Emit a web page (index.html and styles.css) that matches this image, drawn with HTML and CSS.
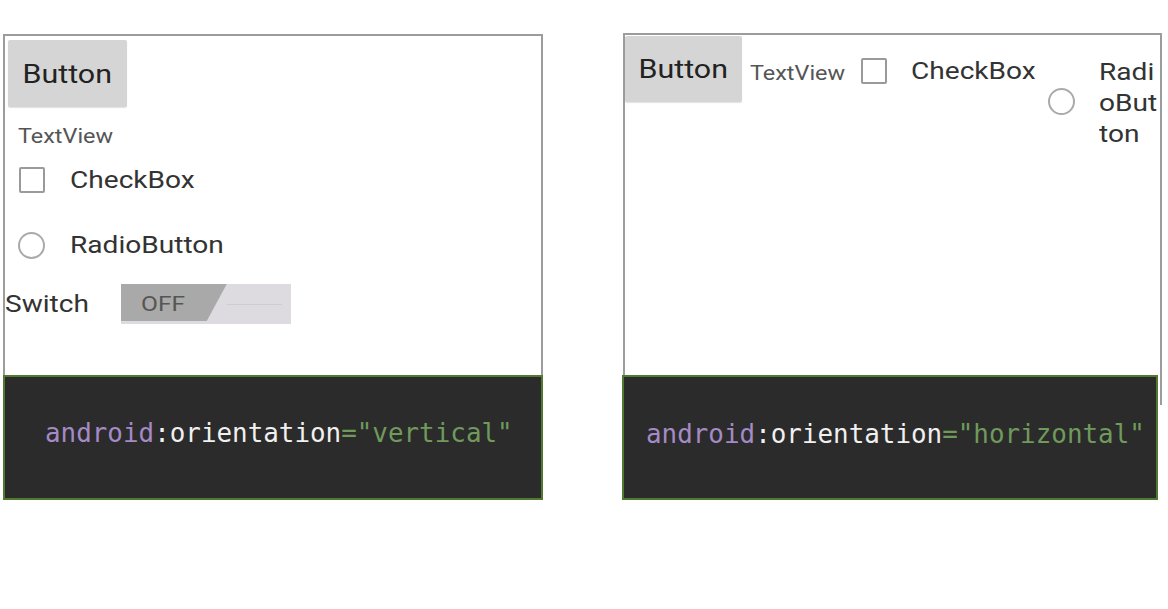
FILE: index.html
```html
<!DOCTYPE html>
<html>
<head>
<meta charset="utf-8">
<link rel="stylesheet" href="styles.css">
</head>
<body>
<div class="stage">
  <section class="panel panel-left">
    <div class="phone phone-v">
      <div class="btn btn-v"><span class="sx sx-c">Button</span></div>
      <div class="textview tv-v"><span class="sx">TextView</span></div>
      <div class="row row-check">
        <span class="check"></span><span class="label sx">CheckBox</span>
      </div>
      <div class="row row-radio">
        <span class="radio"></span><span class="label sx">RadioButton</span>
      </div>
      <div class="row row-switch">
        <span class="label switch-label sx">Switch</span>
        <span class="switch">
          <span class="switch-thumb"><span class="off sx">OFF</span></span>
          <span class="switch-line"></span>
        </span>
      </div>
    </div>
    <div class="code code-v"><span class="ns">android</span><span class="attr">:orientation</span><span class="val">="vertical"</span></div>
  </section>

  <section class="panel panel-right">
    <div class="phone phone-h">
      <div class="btn btn-h"><span class="sx sx-c">Button</span></div>
      <div class="textview tv-h"><span class="sx">TextView</span></div>
      <span class="check check-h"></span>
      <span class="label cb-h sx">CheckBox</span>
      <span class="radio radio-h"></span>
      <span class="label rb-h sx">Radi<br>oBut<br>ton</span>
    </div>
    <div class="code code-h"><span class="ns">android</span><span class="attr">:orientation</span><span class="val">="horizontal"</span></div>
  </section>
</div>
</body>
</html>
```

FILE: styles.css
```css
* { box-sizing: border-box; }
html, body { margin: 0; padding: 0; background: #fff; }
body { width: 1168px; height: 609px; overflow: hidden; font-family: Roboto, "Liberation Sans", sans-serif; }

.stage { display: flex; align-items: flex-start; padding-top: 33px; }

.panel { display: flex; flex-direction: column; }
.panel-left { width: 540px; margin-left: 3px; margin-top: 1px; }
.panel-right { width: 540px; margin-left: 79px; }

/* reference text is horizontally stretched Roboto */
.sx { display: inline-block; transform: scaleX(1.17); transform-origin: left center; }
.sx-c { transform-origin: center center; }

.phone {
  border: 2px solid #9c9c9c;
  border-bottom: none;
  background: #fff;
}
.phone-v { height: 341px; display: flex; flex-direction: column; align-items: flex-start; }
.phone-h { height: 372px; width: 539px; margin-left: 1px; display: flex; align-items: flex-start; }

.btn {
  background: #d5d5d5;
  color: #222;
  font-size: 26px;
  display: flex; align-items: center; justify-content: center;
  border-radius: 2px;
  box-shadow: 0 1px 1px rgba(0,0,0,0.12);
}
.btn-v { width: 119px; height: 67px; margin: 4px 0 0 3px; }
.btn-h { width: 117px; height: 66px; margin: 1px 0 0 0; }

.textview { color: #555; font-size: 20px; line-height: 24px; }
.tv-v { margin: 17px 0 0 13px; }
.tv-h { margin: 26px 0 0 8px; }

.row { display: flex; align-items: center; height: 40px; }
.label { color: #333; font-size: 24px; }
.row-check { margin-top: 12px; margin-left: 14px; }
.row-radio { margin-top: 25px; margin-left: 13px; }
.row-switch { margin-top: 19px; margin-left: 0; }

.check {
  width: 26px; height: 26px;
  border: 2px solid #9a9a9a;
  border-radius: 2px;
  flex: none;
}
.row-check .label { margin-left: 25px; }
.radio {
  width: 27px; height: 27px;
  border: 2px solid #aaa;
  border-radius: 50%;
  flex: none;
}
.row-radio .label { margin-left: 25px; }

.switch {
  position: relative;
  width: 170px; height: 40px;
  margin-left: 44px;
  background: #dedbe0;
  display: block;
}
.switch-thumb {
  display: flex; align-items: center;
  width: 106px; height: 37px;
  background: #a9a9a9;
  clip-path: polygon(0 0, 106px 0, 86px 100%, 0 100%);
}
.off { color: #555; font-size: 21px; margin-left: 20px; margin-top: 2px; }
.switch-line {
  position: absolute; left: 106px; top: 20px;
  width: 55px; height: 1px; background: #cfccd2;
}

.check-h { margin: 23px 0 0 30px; }
.cb-h { margin: 22px 0 0 24px; line-height: 28px; }
.radio-h { margin: 53px 0 0 30px; }
.rb-h { margin: 22px 0 0 24px; line-height: 31px; font-size: 24px; }

.code {
  background: #2b2b2b;
  border: 2px solid #4f7a2f;
  height: 125px;
  display: flex; align-items: center;
  font-family: "DejaVu Sans Mono", "Liberation Mono", monospace;
  font-size: 25.9px;
  white-space: pre;
  position: relative;
}
.code-v { width: 540px; padding-left: 40px; padding-bottom: 10px; }
.code-h { width: 536px; margin-top: -30px; padding-left: 22px; padding-bottom: 8px; }
.ns { color: #a48ac6; }
.attr { color: #f0f0f0; }
.val { color: #6f9a5c; }
```
